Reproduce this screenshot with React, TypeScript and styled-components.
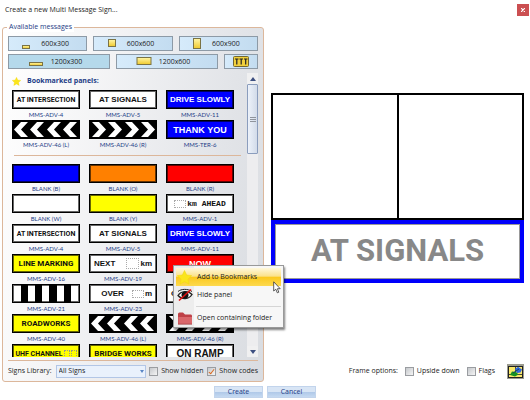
import React, { useState } from "react";
import styled, { createGlobalStyle, css } from "styled-components";

const GlobalStyle = createGlobalStyle`
  *, *::before, *::after { box-sizing: border-box; }
  body {
    margin: 0;
    background: #fff;
    color: #1c1c1c;
    font: 7px/10px "Open Sans", "Noto Sans", sans-serif;
  }
  button, select { font: inherit; color: inherit; }
`;

const navy = "#1d3c86";
const tan = "#dcb79b";

const Window = styled.div`
  position: relative;
  height: 100vh;
  min-height: 400px;
  display: flex;
  flex-direction: column;
`;

const TitleBar = styled.header`
  display: flex;
  justify-content: space-between;
  align-items: center;
  height: 20px;
  padding: 0 1px 0 5px;
`;

const Title = styled.h1`
  margin: 0;
  font-size: 7px;
  font-weight: 400;
`;

const CloseButton = styled.button`
  width: 12px;
  height: 12px;
  padding: 0;
  border: 0;
  display: grid;
  place-items: center;
  background: #cb4f51;
`;

const Body = styled.main`
  flex: 1;
  min-height: 0;
  display: grid;
  grid-template-columns: minmax(0, 262fr) minmax(0, 253fr);
  gap: 7px;
  padding: 0 6px 0 2px;
`;

const LibraryPanel = styled.section`
  position: relative;
  min-height: 0;
  display: flex;
  flex-direction: column;
  margin-top: 7px;
  padding: 8px 5px 0;
  border: 1px solid ${tan};
  border-radius: 3px;
  background: linear-gradient(100deg, #fff 0%, #f7f7f8 25%, #e2e4e8 75%, #d9dce1 100%);
`;

const PanelTitle = styled.h2`
  position: absolute;
  top: -6px;
  left: 4px;
  margin: 0;
  padding: 0 2px;
  background: #fff;
  color: ${navy};
  font-size: 7px;
  font-weight: 400;
`;

const SizeRow = styled.div<{ $columns: string }>`
  display: grid;
  grid-template-columns: ${(p) => p.$columns};
  gap: 6px;
  height: 15px;
  margin-bottom: 3px;
`;

const SizeButton = styled.button<{ $active?: boolean; $iconOnly?: boolean }>`
  display: flex;
  align-items: center;
  justify-content: center;
  gap: 7px;
  padding: 0 ${(p) => (p.$iconOnly ? 0 : 8)}px 0 0;
  border: 1px solid #8d9aa6;
  background: ${(p) =>
    p.$active ? "#b5d9eb" : "linear-gradient(90deg, #d6ebfb, #c3dcf0)"};
`;

const ListFrame = styled.div`
  flex: 1;
  min-height: 0;
  display: grid;
  grid-template-columns: minmax(0, 1fr) 11px;
  margin-top: 1px;
`;

const ListScroller = styled.div`
  overflow-y: auto;
  scrollbar-width: none;
  padding: 3px 6px 0 4px;
`;

const BookmarkTitle = styled.h3`
  display: flex;
  align-items: center;
  gap: 6px;
  height: 10px;
  margin: 0 0 4px;
  color: ${navy};
  font-size: 7px;
  font-weight: 700;
`;

const SignGrid = styled.div`
  display: grid;
  grid-template-columns: repeat(3, minmax(0, 1fr));
  column-gap: 9px;
  padding-right: 7px;
`;

const SignItem = styled.figure`
  margin: 0;
  height: 30px;
`;

const SignCaption = styled.figcaption`
  height: 11px;
  color: ${navy};
  font: 6px/11px Lato, "Open Sans", sans-serif;
  text-align: center;
  white-space: nowrap;
`;

const SignFace = styled.div<{
  $bg?: string;
  $ink?: string;
  $size?: number;
  $compact?: boolean;
  $mono?: boolean;
  $justify?: string;
}>`
  display: flex;
  align-items: center;
  justify-content: ${(p) => p.$justify ?? "center"};
  gap: 1px;
  height: 19px;
  overflow: hidden;
  border: 1px solid #000;
  box-shadow: inset 0 0 0 1px rgba(0, 0, 0, 0.6);
  background: ${(p) => p.$bg ?? "#fff"};
  color: ${(p) => p.$ink ?? "#111"};
  font-family: ${(p) =>
    p.$mono
      ? '"Liberation Mono", monospace'
      : p.$compact
        ? 'Roboto, "Liberation Sans", sans-serif'
        : '"Liberation Sans", Arial, sans-serif'};
  font-size: ${(p) => p.$size ?? 8}px;
  font-weight: 700;
  line-height: 12px;
  white-space: nowrap;
  padding: ${(p) => (p.$justify ? "0 4px" : "0")};
  svg { flex: none; display: block; width: 100%; height: 100%; }
`;

const Blank = styled.span<{ $w: number; $h?: number; $line?: string }>`
  flex: none;
  width: ${(p) => p.$w}px;
  height: ${(p) => p.$h ?? 8}px;
  border: 1px dotted ${(p) => p.$line ?? "#aaa"};
`;

const Rule = styled.hr<{ $space: string }>`
  border: 0;
  height: 1px;
  flex: none;
  margin: ${(p) => p.$space};
  background: ${tan};
`;

const ScrollBar = styled.div`
  display: flex;
  flex-direction: column;
  background: #ededef;
`;

const ArrowButton = styled.button`
  height: 11px;
  padding: 0;
  border: 0;
  display: grid;
  place-items: center;
  background: #f0f0f1;
`;

const Thumb = styled.div`
  height: 70px;
  border: 1px solid #8b9dbd;
  border-radius: 1px;
  display: grid;
  place-items: center;
  background: linear-gradient(90deg, #edf2fa, #d2dbe9);
`;

const Spacer = styled.div`
  flex: 1;
`;

const FilterBar = styled.div`
  display: flex;
  align-items: center;
  justify-content: space-between;
  height: 20px;
  white-space: nowrap;
`;

const Field = styled.label`
  display: flex;
  align-items: center;
  gap: 4px;
`;

const SelectBox = styled.span`
  position: relative;
  display: flex;
  align-items: center;
`;

const Select = styled.select`
  appearance: none;
  width: 90px;
  height: 13px;
  padding: 0 2px;
  border: 1px solid #b2c6e6;
  border-radius: 0;
  background: #e9f1fc;
`;

const SelectArrow = styled.svg`
  position: absolute;
  right: 2px;
  pointer-events: none;
`;

const Check = styled.label`
  display: flex;
  align-items: center;
  gap: 3px;
`;

const CheckInput = styled.input`
  appearance: none;
  width: 9px;
  height: 9px;
  margin: 0;
  border: 1px solid #9a9da1;
  background: linear-gradient(135deg, #c5c8cc, #f5f5f5);
  display: grid;
  place-items: center;
  &:checked::after {
    content: "";
    width: 3px;
    height: 6px;
    border: solid #d9681e;
    border-width: 0 1px 1px 0;
    transform: rotate(38deg);
  }
`;

const PreviewPanel = styled.section`
  display: flex;
  flex-direction: column;
  min-height: 0;
  padding-top: 73px;
`;

const FrameCells = styled.div`
  display: grid;
  grid-template-columns: 1fr 1fr;
  gap: 2px;
  aspect-ratio: 2 / 1;
  padding: 2px;
  background: #000;
`;

const FrameCell = styled.div`
  background: #fff;
`;

const SelectedSign = styled.div`
  display: grid;
  place-items: center;
  height: 63px;
  border: 4px solid #0000fb;
  background: #fff;
  outline: 1px solid #999;
  outline-offset: -5px;
  color: #888;
  font: 700 31px/40px Roboto, "Liberation Sans", Arial, sans-serif;
  white-space: nowrap;
`;

const FrameOptions = styled.div`
  display: flex;
  align-items: center;
  justify-content: flex-end;
  gap: 7px;
  height: 20px;
  margin-bottom: 1px;
`;

const PaintButton = styled.button`
  margin-left: 5px;
  padding: 0;
  border: 0;
  width: 17px;
  height: 15px;
  background: none;
  svg { display: block; }
`;

const Actions = styled.footer`
  display: flex;
  justify-content: center;
  gap: 4px;
  height: 18px;
  padding-top: 4px;
`;

const ActionButton = styled.button`
  width: 49px;
  height: 12px;
  padding: 0;
  line-height: 10px;
  border: 1px solid #c2d4ec;
  color: ${navy};
  background: linear-gradient(#d8e5f5 0 45%, #aec8e8 50%, #c5d9f1);
`;

const Menu = styled.ul`
  position: absolute;
  left: 173px;
  top: 265px;
  width: 111px;
  margin: 0;
  padding: 2px 2px 0;
  list-style: none;
  border: 1px solid #999;
  background: linear-gradient(90deg, #ededed 0 20px, #f7f7f7 20px);
  box-shadow: 1px 2px 2px rgba(0, 0, 0, 0.5);
`;

const MenuEntry = styled.li<{ $divided?: boolean }>`
  ${(p) =>
    p.$divided &&
    css`
      margin-top: 2px;
      padding-top: 3px;
      background: linear-gradient(#d5d5d5, #d5d5d5) 20px 0 / 100% 1px no-repeat;
    `}
`;

const MenuButton = styled.button<{ $active?: boolean }>`
  display: grid;
  grid-template-columns: 17px 1fr;
  gap: 4px;
  align-items: center;
  width: 100%;
  height: 18px;
  padding: 0;
  border: 0;
  text-align: left;
  white-space: nowrap;
  background: ${(p) =>
    p.$active ? "linear-gradient(#fff8dc, #fbe28c 45%, #fbc91f 52%, #fdd94f)" : "transparent"};
  svg { justify-self: center; }
`;

const Pointer = styled.svg`
  position: absolute;
  left: 273px;
  top: 281px;
`;

const starPoints = "8,0.5 10.3,5.4 15.6,6 11.7,9.7 12.8,15 8,12.4 3.2,15 4.3,9.7 0.4,6 5.7,5.4";

const StarIcon = ({ size }: { size: number }) => (
  <svg width={size} height={size} viewBox="0 0 16 16">
    <polygon points={starPoints} fill="#fbe51c" stroke="#f3d90f" strokeWidth="0.6" />
  </svg>
);

const SizeIcon = ({ w, h, y }: { w: number; h: number; y: number }) => (
  <svg width="16" height="13" viewBox="0 0 16 13">
    <defs>
      <linearGradient id={`gold${w}${h}`} x1="0" y1="0" x2="0" y2="1">
        <stop offset="0" stopColor="#fff6a8" />
        <stop offset="1" stopColor="#efc92c" />
      </linearGradient>
    </defs>
    <rect
      x={(16 - w) / 2 + 0.5}
      y={y + 0.5}
      width={w - 1}
      height={h - 1}
      fill={`url(#gold${w}${h})`}
      stroke="#7b7345"
    />
  </svg>
);

const PanelsIcon = () => (
  <svg width="17" height="11" viewBox="0 0 17 11">
    <rect x="0.5" y="0.5" width="15" height="10" rx="1" fill="#f1d03c" stroke="#756830" />
    <path d="M2 3H5.5M6.5 3H10M11 3H14.5" stroke="#222" strokeWidth="1.2" />
    <path d="M3.8 3V8.5M8.2 3V8.5M12.7 3V8.5" stroke="#222" strokeWidth="1.2" />
  </svg>
);

const Chevrons = ({ right }: { right?: boolean }) => (
  <svg viewBox="0 0 66 17" preserveAspectRatio="none">
    <rect width="66" height="17" fill="#000" />
    <g fill="#fff" transform={right ? "translate(66 0) scale(-1 1)" : undefined}>
      {[1, 17, 34, 50].map((x) => (
        <path key={x} d={`M${x} 8.5L${x + 7} 1H${x + 14}L${x + 7} 8.5L${x + 14} 16H${x + 7}Z`} />
      ))}
    </g>
  </svg>
);

const Bars = () => (
  <svg viewBox="0 0 66 17" preserveAspectRatio="none">
    <path d="M8 0h7v17H8zM22 0h7v17h-7zM36 0h8v17h-8zM51 0h7v17h-7z" />
  </svg>
);

const EyeOffIcon = () => (
  <svg width="16" height="14" viewBox="0 0 16 14">
    <path d="M1 7.5C4 3 11 2 15 6.5C12 11.5 5 12 1 7.5Z" fill="#fff" stroke="#222" strokeWidth="1.3" />
    <circle cx="8" cy="7" r="3.5" fill="#111" />
    <path d="M1 3.5C4 0.8 11 0.5 15 3.5" fill="none" stroke="#222" />
    <path d="M2 12.5L14 1.5" stroke="#e01010" strokeWidth="1.6" />
  </svg>
);

const FolderIcon = () => (
  <svg width="16" height="14" viewBox="0 0 16 14">
    <path d="M1 13V3Q1 1.5 2.5 1.5H6L8 3.5H14Q15 3.5 15 5V13Z" fill="#bf4147" />
    <path d="M1.3 13V6H15V13Z" fill="#d9676b" />
    <path d="M1 13.2H15" stroke="#a23a3e" strokeWidth="0.8" />
  </svg>
);

const PaintIcon = () => (
  <svg width="17" height="15" viewBox="0 0 17 15">
    <rect width="17" height="15" fill="#9b9b8f" />
    <rect x="1.5" y="2.5" width="14" height="11" fill="#fbe869" stroke="#222" />
    <path d="M1.5 10.5H15.5M8.5 2V8" stroke="#222" strokeWidth="0.8" />
    <path d="M8 5L11 2.8L15 5.5L13.5 8.5L10 9Z" fill="#2f68dc" />
    <path d="M3 11L5 7.5L9 8L11.5 10.5L8 12.5Z" fill="#16921f" />
    <path d="M6 9L12 5" stroke="#123f6b" />
  </svg>
);

const Triangle = ({ up }: { up?: boolean }) => (
  <svg width="6" height="4" viewBox="0 0 6 4">
    <path d={up ? "M0 4L3 0L6 4Z" : "M0 0L3 4L6 0Z"} fill="#3d4f80" />
  </svg>
);

type Sign = { code: string; face: React.ReactNode };

const yellow = "#ffff00";
const blue = "#0000ff";

const atIntersection: Sign = {
  code: "MMS-ADV-4",
  face: <SignFace $compact $size={7}>AT INTERSECTION</SignFace>,
};
const atSignals: Sign = { code: "MMS-ADV-5", face: <SignFace>AT SIGNALS</SignFace> };
const driveSlowly: Sign = {
  code: "MMS-ADV-11",
  face: <SignFace $bg={blue} $ink="#fff">DRIVE SLOWLY</SignFace>,
};
const chevronLeft: Sign = { code: "MMS-ADV-46 (L)", face: <SignFace><Chevrons /></SignFace> };
const chevronRight: Sign = { code: "MMS-ADV-46 (R)", face: <SignFace><Chevrons right /></SignFace> };

const bookmarked: Sign[] = [
  atIntersection,
  atSignals,
  driveSlowly,
  chevronLeft,
  chevronRight,
  { code: "MMS-TER-6", face: <SignFace $bg={blue} $ink="#fff" $size={9}>THANK YOU</SignFace> },
];

const library: Sign[] = [
  { code: "BLANK (B)", face: <SignFace $bg={blue} /> },
  { code: "BLANK (O)", face: <SignFace $bg="#ff8000" /> },
  { code: "BLANK (R)", face: <SignFace $bg="#ff0000" /> },
  { code: "BLANK (W)", face: <SignFace /> },
  { code: "BLANK (Y)", face: <SignFace $bg={yellow} /> },
  { code: "MMS-ADV-1", face: <SignFace $mono><Blank $w={12} />km AHEAD</SignFace> },
  atIntersection,
  atSignals,
  driveSlowly,
  { code: "MMS-ADV-16", face: <SignFace $bg={yellow} $compact>LINE MARKING</SignFace> },
  {
    code: "MMS-ADV-19",
    face: (
      <SignFace $justify="space-between">
        NEXT<Spacer /><Blank $w={13} $h={11} />km
      </SignFace>
    ),
  },
  { code: "", face: <SignFace $bg="#ff0000" $ink="#fff" $size={9}>NOW</SignFace> },
  { code: "MMS-ADV-21", face: <SignFace><Bars /></SignFace> },
  {
    code: "MMS-ADV-23",
    face: (
      <SignFace $justify="flex-end">
        OVER<Blank $w={6} $h={0} $line="transparent" /><Blank $w={12} />m
      </SignFace>
    ),
  },
  { code: "", face: <SignFace $justify="flex-start">O</SignFace> },
  { code: "MMS-ADV-40", face: <SignFace $bg={yellow} $compact>ROADWORKS</SignFace> },
  chevronLeft,
  chevronRight,
  {
    code: "",
    face: (
      <SignFace $bg={yellow} $compact $size={7}>
        UHF CHANNEL <Blank $w={6} $line="#998" /><Blank $w={6} $line="#998" />
      </SignFace>
    ),
  },
  { code: "", face: <SignFace $bg={yellow} $compact>BRIDGE WORKS</SignFace> },
  { code: "", face: <SignFace $size={10}>ON RAMP</SignFace> },
];

const Signs = ({ items, codes }: { items: Sign[]; codes: boolean }) => (
  <SignGrid>
    {items.map((s, i) => (
      <SignItem key={i}>
        {s.face}
        <SignCaption>{codes ? s.code : ""}</SignCaption>
      </SignItem>
    ))}
  </SignGrid>
);

export default function App() {
  const [codes, setCodes] = useState(true);
  return (
    <>
      <GlobalStyle />
      <Window>
        <TitleBar>
          <Title>Create a new Multi Message Sign...</Title>
          <CloseButton aria-label="Close">
            <svg width="4" height="4" viewBox="0 0 4 4">
              <path d="M0 0L4 4M4 0L0 4" stroke="#fff" strokeWidth="1.2" />
            </svg>
          </CloseButton>
        </TitleBar>
        <Body>
          <LibraryPanel>
            <PanelTitle>Available messages</PanelTitle>
            <SizeRow $columns="1fr 1fr 1fr">
              <SizeButton><SizeIcon w={8} h={4} y={8} />600x300</SizeButton>
              <SizeButton><SizeIcon w={8} h={8} y={2} />600x600</SizeButton>
              <SizeButton><SizeIcon w={8} h={11} y={1} />600x900</SizeButton>
            </SizeRow>
            <SizeRow $columns="3fr 3fr 1fr">
              <SizeButton $active><SizeIcon w={14} h={4} y={7} />1200x300</SizeButton>
              <SizeButton><SizeIcon w={15} h={8} y={2} />1200x600</SizeButton>
              <SizeButton $iconOnly aria-label="All panels"><PanelsIcon /></SizeButton>
            </SizeRow>
            <ListFrame>
              <ListScroller>
                <BookmarkTitle><StarIcon size={9} />Bookmarked panels:</BookmarkTitle>
                <Signs items={bookmarked} codes={codes} />
                <Rule $space="5px 0 8px 2px" />
                <Signs items={library} codes={codes} />
              </ListScroller>
              <ScrollBar>
                <ArrowButton aria-label="Scroll up"><Triangle up /></ArrowButton>
                <Thumb>
                  <svg width="6" height="5" viewBox="0 0 6 5">
                    <path d="M0 0.5H6M0 2.5H6M0 4.5H6" stroke="#8f949c" />
                  </svg>
                </Thumb>
                <Spacer />
                <ArrowButton aria-label="Scroll down"><Triangle /></ArrowButton>
              </ScrollBar>
            </ListFrame>
            <Rule $space="3px 0 0" />
            <FilterBar>
              <Field>
                Signs Library:
                <SelectBox>
                  <Select defaultValue="All Signs"><option>All Signs</option></Select>
                  <SelectArrow width="4" height="3" viewBox="0 0 4 3">
                    <path d="M0 0H4L2 3Z" fill="#5a86c4" />
                  </SelectArrow>
                </SelectBox>
              </Field>
              <Check><CheckInput type="checkbox" />Show hidden</Check>
              <Check>
                <CheckInput type="checkbox" checked={codes} onChange={() => setCodes(!codes)} />
                Show codes
              </Check>
            </FilterBar>
          </LibraryPanel>
          <PreviewPanel>
            <FrameCells><FrameCell /><FrameCell /></FrameCells>
            <SelectedSign>AT SIGNALS</SelectedSign>
            <Spacer />
            <FrameOptions>
              Frame options:
              <Check><CheckInput type="checkbox" />Upside down</Check>
              <Check><CheckInput type="checkbox" />Flags</Check>
              <PaintButton aria-label="Frame colours"><PaintIcon /></PaintButton>
            </FrameOptions>
          </PreviewPanel>
        </Body>
        <Actions>
          <ActionButton>Create</ActionButton>
          <ActionButton>Cancel</ActionButton>
        </Actions>
        <Menu>
          <MenuEntry>
            <MenuButton $active><StarIcon size={15} />Add to Bookmarks</MenuButton>
          </MenuEntry>
          <MenuEntry>
            <MenuButton><EyeOffIcon />Hide panel</MenuButton>
          </MenuEntry>
          <MenuEntry $divided>
            <MenuButton><FolderIcon />Open containing folder</MenuButton>
          </MenuEntry>
        </Menu>
        <Pointer width="8" height="13" viewBox="0 0 8 13">
          <path d="M0.7 0.8V10L2.8 8.2L4.3 11.8L5.8 11.2L4.4 7.7H7.2Z" fill="#fff" stroke="#333" strokeWidth="0.8" />
        </Pointer>
      </Window>
    </>
  );
}
